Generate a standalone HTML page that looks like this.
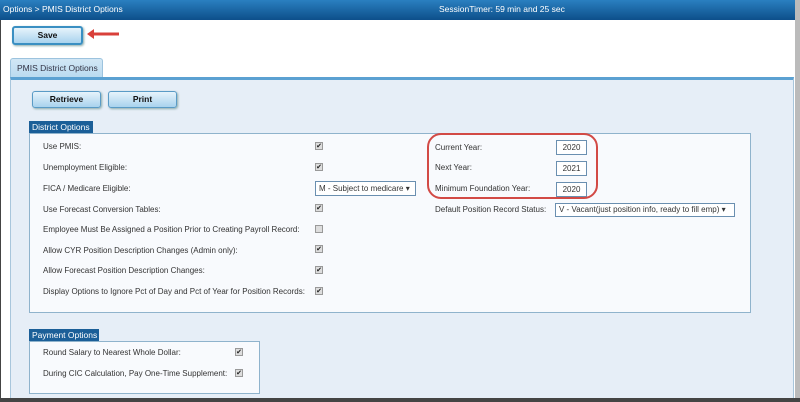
<!DOCTYPE html>
<html><head><style>
*{margin:0;padding:0;box-sizing:border-box}
body{width:800px;height:402px;background:#fff;font-family:"Liberation Sans",sans-serif;font-size:8px;color:#333;position:relative;overflow:hidden}
.a{position:absolute;white-space:nowrap}
.top{left:0;top:0;width:795px;height:20px;background:linear-gradient(#2a7fc0,#0d4f8a);color:#fff;font-size:8.5px;line-height:19px}
.btn{background:linear-gradient(#e6f3fb,#a9d3ee);border:1px solid #5a9bc6;border-radius:3px;font-weight:bold;font-size:8.5px;text-align:center;color:#111;box-shadow:1px 1px 2px #8aa}
.hdr{background:#1b5f98;color:#fff;font-size:8.5px;line-height:13px;padding-left:3px}
.box{border:1px solid #8fb3cc;background:#f8fafd}
.cb{width:8px;height:8px;border:1px solid #999;background:#ddd;font-size:7px;line-height:7px;text-align:center;color:#222}
.inp{border:1px solid #6a8fb0;background:#fff;font-size:8px;text-align:center;line-height:14px}
</style></head><body>
<div class="a" style="left:0;top:0;width:1px;height:402px;background:#444"></div>
<div class="a top"><span style="padding-left:3px">Options &gt; PMIS District Options</span><span class="a" style="left:439px">SessionTimer: 59 min and 25 sec</span></div>
<div class="a" style="left:795px;top:0;width:5px;height:402px;background:#bbb"></div>
<div class="a btn" style="left:12px;top:26px;width:71px;height:19px;line-height:15px;border:2px solid #3a8fc2">Save</div>
<svg class="a" style="left:84px;top:28px" width="38" height="12"><path d="M3 6 L10 1 L10 4.5 L35 4.5 L35 7.5 L10 7.5 L10 11 Z" fill="#d9403a"/></svg>
<div class="a" style="left:10px;top:58px;width:93px;height:20px;background:linear-gradient(#d2e7f5,#b9daf0);border:1px solid #9cc3de;border-bottom:none;border-radius:3px 3px 0 0;font-size:8.5px;line-height:18px;padding-left:6px;color:#334">PMIS District Options</div>
<div class="a" style="left:10px;top:77px;width:784px;height:322px;background:#e6eef7;border-top:3px solid #5ba1d2;border-left:1px solid #a8c6dc;border-right:1px solid #a8c6dc"></div>
<div class="a" style="left:0;top:398px;width:800px;height:4px;background:#444"></div>
<div class="a btn" style="left:32px;top:91px;width:69px;height:17px;line-height:15px">Retrieve</div>
<div class="a btn" style="left:108px;top:91px;width:69px;height:17px;line-height:15px">Print</div>
<div class="a hdr" style="left:29px;top:121px;width:64px;height:13px">District Options</div>
<div class="a box" style="left:29px;top:133px;width:722px;height:180px"></div>
<div class="a" style="left:43px;top:142px">Use PMIS:</div>
<div class="a" style="left:43px;top:163px">Unemployment Eligible:</div>
<div class="a" style="left:43px;top:184px">FICA / Medicare Eligible:</div>
<div class="a" style="left:43px;top:205px">Use Forecast Conversion Tables:</div>
<div class="a" style="left:43px;top:225px">Employee Must Be Assigned a Position Prior to Creating Payroll Record:</div>
<div class="a" style="left:43px;top:246px">Allow CYR Position Description Changes (Admin only):</div>
<div class="a" style="left:43px;top:266px">Allow Forecast Position Description Changes:</div>
<div class="a" style="left:43px;top:287px">Display Options to Ignore Pct of Day and Pct of Year for Position Records:</div>
<div class="a cb" style="left:315px;top:142px">✔</div>
<div class="a cb" style="left:315px;top:163px">✔</div>
<div class="a" style="left:315px;top:181px;width:101px;height:15px;border:1px solid #6a8fb0;background:#fff;font-size:8px;line-height:13px;padding-left:3px">M - Subject to medicare ▾</div>
<div class="a cb" style="left:315px;top:204px">✔</div>
<div class="a cb" style="left:315px;top:225px"></div>
<div class="a cb" style="left:315px;top:245px">✔</div>
<div class="a cb" style="left:315px;top:266px">✔</div>
<div class="a cb" style="left:315px;top:287px">✔</div>
<div class="a" style="left:435px;top:143px">Current Year:</div>
<div class="a" style="left:435px;top:163px">Next Year:</div>
<div class="a" style="left:435px;top:184px">Minimum Foundation Year:</div>
<div class="a" style="left:435px;top:205px">Default Position Record Status:</div>
<div class="a inp" style="left:556px;top:140px;width:31px;height:15px">2020</div>
<div class="a inp" style="left:556px;top:161px;width:31px;height:15px">2021</div>
<div class="a inp" style="left:556px;top:182px;width:31px;height:15px">2020</div>
<div class="a" style="left:555px;top:203px;width:180px;height:14px;border:1px solid #6a8fb0;background:#fff;line-height:12px;padding-left:3px">V - Vacant(just position info, ready to fill emp) ▾</div>
<div class="a" style="left:427px;top:133px;width:171px;height:66px;border:2px solid #d24a45;border-radius:14px"></div>
<div class="a hdr" style="left:29px;top:329px;width:70px;height:13px">Payment Options</div>
<div class="a box" style="left:29px;top:341px;width:231px;height:53px"></div>
<div class="a" style="left:43px;top:348px">Round Salary to Nearest Whole Dollar:</div>
<div class="a" style="left:43px;top:369px">During CIC Calculation, Pay One-Time Supplement:</div>
<div class="a cb" style="left:235px;top:348px">✔</div>
<div class="a cb" style="left:235px;top:369px">✔</div>
</body></html>
